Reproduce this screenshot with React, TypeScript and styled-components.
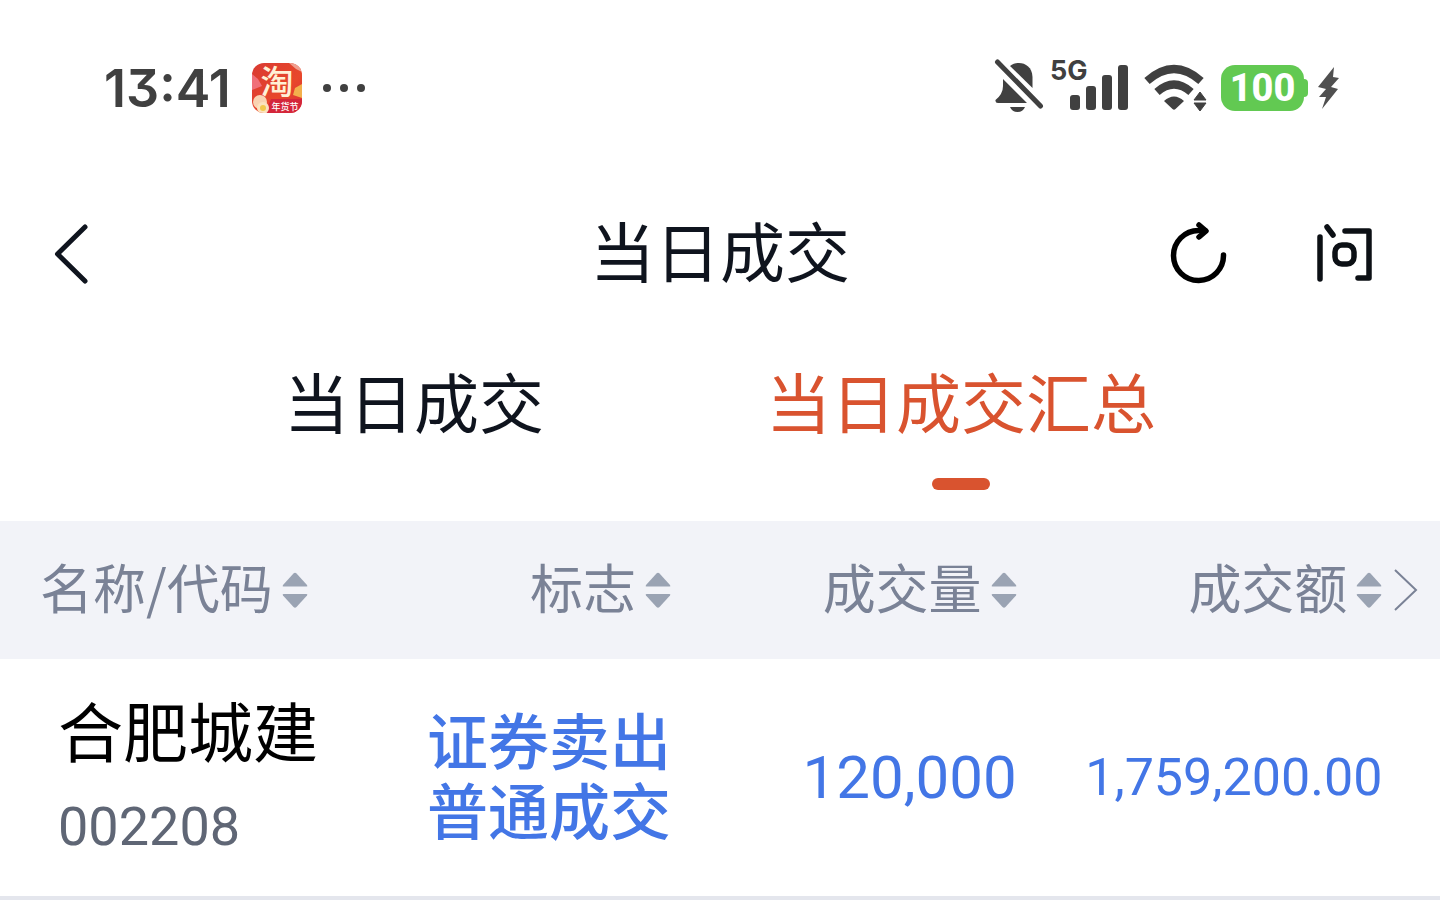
import React from "react";
import styled, { createGlobalStyle } from "styled-components";

const cjk = `"Noto Sans CJK SC", sans-serif`;

const GlobalStyle = createGlobalStyle`
  *, *::before, *::after { box-sizing: border-box; }
  body { margin: 0; background: #fff; color: #0f141e; font-family: Roboto, ${cjk}; }
  button { border: 0; padding: 0; margin: 0; background: none; color: inherit; font: inherit; cursor: pointer; }
  svg { display: block; flex: none; overflow: visible; }
`;

const StatusBar = styled.header`
  display: flex;
  align-items: center;
  justify-content: space-between;
  height: 176px;
  padding: 0 100px 0 104px;
  color: #404040;
`;

const StatusGroup = styled.div<{ $gap: number }>`
  display: flex;
  align-items: center;
  gap: ${(p) => p.$gap}px;
`;

const Clock = styled.time`
  padding-top: 2px;
  font: 600 52px/60px Inter, sans-serif;
  font-feature-settings: "cv09", "calt";
`;

const Battery = styled.div`
  display: flex;
  align-items: center;
  height: 46px;
  &::after {
    content: "";
    width: 4px;
    height: 18px;
    border-radius: 0 4px 4px 0;
    background: #62c952;
  }
`;

const BatteryLevel = styled.span`
  width: 83px;
  border-radius: 14px;
  background: #62c952;
  color: #fff;
  font: 800 38px/46px Roboto, sans-serif;
  text-align: center;
`;

const NavBar = styled.nav`
  display: grid;
  grid-template-columns: 1fr auto 1fr;
  align-items: center;
  height: 156px;
  padding: 0 54px;
`;

const Title = styled.h1`
  margin: 0;
  padding-bottom: 10px;
  font: 400 65px/96px ${cjk};
`;

const Actions = styled.div`
  display: flex;
  justify-content: flex-end;
  gap: 61px;
`;

const IconButton = styled.button<{ $width: number }>`
  display: flex;
  align-items: center;
  justify-content: center;
  width: ${(p) => p.$width}px;
  height: 80px;
`;

const Tabs = styled.div`
  display: flex;
  justify-content: center;
  gap: 222px;
  height: 189px;
  padding-top: 20px;
`;

const Tab = styled.button<{ $active?: boolean }>`
  display: flex;
  flex-direction: column;
  align-items: center;
  gap: 30px;
  height: 138px;
  color: ${(p) => (p.$active ? "#d9532f" : "#0f141e")};
  font: 400 65px/96px ${cjk};
  &::after {
    content: "";
    width: 58px;
    height: 12px;
    border-radius: 6px;
    background: ${(p) => (p.$active ? "#d9532f" : "transparent")};
  }
`;

const Table = styled.table`
  width: 100%;
  border-collapse: separate;
  border-spacing: 0;
  table-layout: fixed;
`;

const HeadCell = styled.th<{ $share: string; $start?: boolean }>`
  width: ${(p) => p.$share};
  height: 138px;
  padding: 0 0 0 ${(p) => (p.$start ? 40 : 0)}px;
  background: #f2f3f8;
  color: #7a8296;
  font-weight: 400;
`;

const SortButton = styled.button<{ $start?: boolean }>`
  display: flex;
  align-items: center;
  justify-content: ${(p) => (p.$start ? "flex-start" : "flex-end")};
  gap: 9px;
  width: 100%;
  font: 400 53px/76px ${cjk};
  white-space: nowrap;
`;

const SortLabel = styled.span`
  padding-bottom: 8px;
`;

const Cell = styled.td<{ $size?: number }>`
  height: 241px;
  padding: 0;
  border-bottom: 4px solid #e4e6ed;
  color: #4376e6;
  font-size: ${(p) => p.$size ?? 60}px;
  line-height: 70px;
  text-align: right;
  white-space: nowrap;
`;

const StockCell = styled(Cell)`
  padding-left: 58px;
  text-align: left;
`;

const StockName = styled.div`
  padding-bottom: 10px;
  color: #000;
  font: 400 65px/88px ${cjk};
`;

const StockCode = styled.div`
  color: #5f6675;
  font: 400 54px/88px Roboto, sans-serif;
`;

const Flags = styled.div`
  padding-bottom: 8px;
  font: 500 61px/70px ${cjk};
  white-space: pre-line;
`;

const AppBadge = () => (
  <svg width="50" height="50" viewBox="0 0 50 50" role="img" aria-label="淘宝">
    <defs>
      <clipPath id="badge"><rect width="50" height="50" rx="12" /></clipPath>
      <linearGradient id="badgeFill" x1="0" y1="0" x2="1" y2="1">
        <stop offset="0" stopColor="#d93a33" />
        <stop offset=".6" stopColor="#e8472b" />
        <stop offset="1" stopColor="#d93038" />
      </linearGradient>
    </defs>
    <g clipPath="url(#badge)">
      <rect width="50" height="50" fill="url(#badgeFill)" />
      <path d="M0 11l6 5 4 7-10 4z" fill="#f0707a" />
      <path d="M37 0h13v9l-6-3z" fill="#f0a090" />
      <path d="M43 25l7-4v14l-9-3z" fill="#f3b04c" />
      <path d="M19 36h31v14H13z" fill="#d4263a" />
      <circle cx="8" cy="39" r="7" fill="#f9d3b2" />
      <circle cx="11" cy="45" r="6" fill="#fbe3bf" />
      <circle cx="11" cy="45" r="3" fill="#f2c84e" />
    </g>
    <text x="25" y="31" textAnchor="middle" fontFamily='"Noto Sans CJK SC", sans-serif' fontWeight="500" fontSize="33" fill="#fff0d6">淘</text>
    <text x="33" y="47" textAnchor="middle" fontFamily='"Noto Sans CJK SC", sans-serif' fontWeight="500" fontSize="9" fill="#fff">年货节</text>
  </svg>
);

const MoreDots = () => (
  <svg width="42" height="10" viewBox="0 0 42 10" fill="#404040" aria-hidden="true">
    <circle cx="4" cy="5" r="4" /><circle cx="21" cy="5" r="4" /><circle cx="38" cy="5" r="4" />
  </svg>
);

const MutedBell = () => (
  <svg width="48" height="58" viewBox="0 0 48 58" fill="#404040" aria-hidden="true">
    <path d="M15 7C23 1 37 4 37.500 18V29z" />
    <path d="M8 20L32 44H3Q0 44 .500 41Q8 35 8 27z" />
    <path d="M15 48H30Q28 53 22.500 53T15 48z" />
    <path d="M2.500 3L45.500 47" stroke="#404040" strokeWidth="5" strokeLinecap="round" />
  </svg>
);

const Signal = () => (
  <svg width="77" height="60" viewBox="0 0 77 60" fill="#404040" role="img" aria-label="5G">
    <text x="-2" y="22" fontFamily="Inter, sans-serif" fontWeight="700" fontSize="27">5G</text>
    <rect x="18" y="37" width="10" height="15" rx="3" />
    <rect x="34" y="28" width="10" height="24" rx="3" />
    <rect x="50" y="17" width="10" height="35" rx="3" />
    <rect x="66" y="7" width="10" height="45" rx="3" />
  </svg>
);

const Wifi = () => (
  <svg width="64" height="46" viewBox="0 0 64 46" fill="none" stroke="#404040" aria-hidden="true">
    <path d="M4 16Q31 -8 58 16" strokeWidth="8" />
    <path d="M14 27Q31 12 48 27" strokeWidth="8" />
    <path d="M21 36Q31 27 41 36L32.500 44Q31 45.500 29.500 44z" fill="#404040" stroke="none" />
    <path d="M51 35L57 27L63 35zM51 38H63L57 46z" fill="#404040" stroke="#404040" strokeWidth="1" strokeLinejoin="round" />
  </svg>
);

const Bolt = () => (
  <svg width="23" height="46" viewBox="0 0 23 46" fill="#505050" aria-hidden="true">
    <path d="M17 2L1 22L9 24L2 32L9 32L5 44L21 24L14 22L22 13L16 12z" />
  </svg>
);

const SortArrows = () => (
  <svg width="26" height="38" viewBox="0 0 26 38" fill="#9aa3b3" aria-hidden="true">
    <path d="M1.500 15.500Q0 15.500 1 14L11.500 2.500Q13 1 14.500 2.500L25 14Q26 15.500 24.500 15.500z" />
    <path d="M1.500 23Q0 23 1 24.500L11.500 36Q13 37.500 14.500 36L25 24.500Q26 23 24.500 23z" />
  </svg>
);

const columns = [
  { label: "名称/代码", share: "25%", start: true },
  { label: "标志", share: "21.6%" },
  { label: "成交量", share: "24%" },
  { label: "成交额", share: "25.4%" },
];

const trades = [
  { name: "合肥城建", code: "002208", flags: ["证券卖出", "普通成交"], volume: "120,000", amount: "1,759,200.00" },
];

export default function App() {
  return (
    <>
      <GlobalStyle />
      <StatusBar>
        <StatusGroup $gap={21}>
          <Clock>13:41</Clock>
          <AppBadge />
          <MoreDots />
        </StatusGroup>
        <StatusGroup $gap={9}>
          <MutedBell />
          <StatusGroup $gap={14}>
            <Signal />
            <Wifi />
            <StatusGroup $gap={9}>
              <Battery><BatteryLevel>100</BatteryLevel></Battery>
              <Bolt />
            </StatusGroup>
          </StatusGroup>
        </StatusGroup>
      </StatusBar>
      <NavBar>
        <IconButton $width={36} aria-label="返回">
          <svg width="36" height="60" viewBox="0 0 36 60" fill="none" stroke="#0f141e" strokeWidth="5" strokeLinecap="round" strokeLinejoin="round">
            <path d="M31 3L3.500 30L31 57" />
          </svg>
        </IconButton>
        <Title>当日成交</Title>
        <Actions>
          <IconButton $width={84} aria-label="刷新">
            <svg width="60" height="64" viewBox="0 0 60 64" fill="none" stroke="#000" strokeWidth="5.500" strokeLinecap="round" strokeLinejoin="round">
              <path d="M54.500 33A25 25 0 1 1 29.500 8.500H36" />
              <path d="M30 3L37 9L30 15" />
            </svg>
          </IconButton>
          <IconButton $width={84} aria-label="问">
            <svg width="60" height="64" viewBox="0 0 60 64" fill="none" stroke="#0c1015" strokeWidth="5.500" strokeLinecap="round" strokeLinejoin="round">
              <path d="M6 15V57M13 5L19 13" />
              <path d="M31 9H55V56H44" />
              <rect x="21" y="23" width="19" height="19" rx="7" />
            </svg>
          </IconButton>
        </Actions>
      </NavBar>
      <Tabs role="tablist">
        <Tab role="tab" aria-selected="false">当日成交</Tab>
        <Tab role="tab" aria-selected="true" $active>当日成交汇总</Tab>
      </Tabs>
      <Table>
        <thead>
          <tr>
            {columns.map((c) => (
              <HeadCell key={c.label} $share={c.share} $start={c.start} scope="col">
                <SortButton $start={c.start}><SortLabel>{c.label}</SortLabel><SortArrows /></SortButton>
              </HeadCell>
            ))}
            <HeadCell $share="4%" scope="col">
              <IconButton $width={48} aria-label="更多列">
                <svg width="24" height="42" viewBox="0 0 24 42" fill="none" stroke="#7a8296" strokeWidth="2">
                  <path d="M1 1L22 21L1 41" />
                </svg>
              </IconButton>
            </HeadCell>
          </tr>
        </thead>
        <tbody>
          {trades.map((t) => (
            <tr key={t.code}>
              <StockCell>
                <StockName>{t.name}</StockName>
                <StockCode>{t.code}</StockCode>
              </StockCell>
              <Cell><Flags>{t.flags.join("\n")}</Flags></Cell>
              <Cell>{t.volume}</Cell>
              <Cell $size={52}>{t.amount}</Cell>
              <Cell />
            </tr>
          ))}
        </tbody>
      </Table>
    </>
  );
}
